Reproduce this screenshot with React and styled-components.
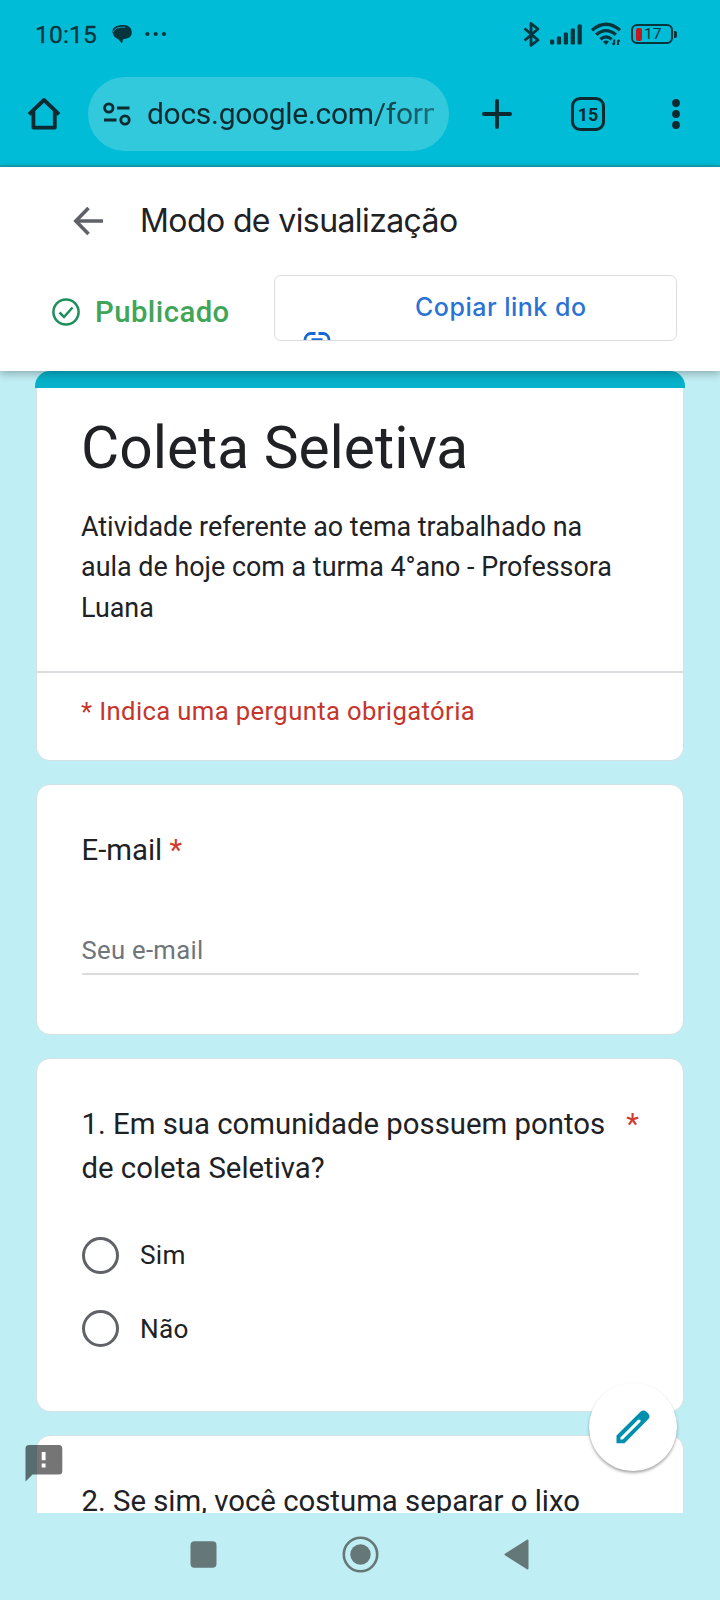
import { useState } from "react";
import styled, { createGlobalStyle } from "styled-components";

const form = {
  title: "Coleta Seletiva",
  description:
    "Atividade referente ao tema trabalhado na aula de hoje com a turma 4°ano - Professora Luana",
  requiredHint: "* Indica uma pergunta obrigatória",
  email: { label: "E-mail", placeholder: "Seu e-mail" },
  question1: {
    text: "1. Em sua comunidade possuem pontos de coleta Seletiva?",
    options: ["Sim", "Não"],
  },
  question2: "2. Se sim, você costuma separar o lixo",
};

const signalBars = [5, 8, 12, 16, 20];

function StatusIcons() {
  return (
    <StatusGroup>
      <svg width="18" height="27" viewBox="0 0 18 27">
        <path
          d="M1.5 7.5 L15 19 L8 24.5 V2.5 L15 8 L1.5 19.5"
          fill="none"
          stroke="#06353d"
          strokeWidth="2.8"
          strokeLinejoin="round"
        />
      </svg>
      <svg width="32" height="22" viewBox="0 0 32 22">
        {signalBars.map((h, i) => (
          <rect
            key={h}
            x={i * 6.9}
            y={21.5 - h}
            width="4.2"
            height={h}
            rx="1.2"
            fill="#06353d"
          />
        ))}
      </svg>
      <svg width="31" height="24" viewBox="0 0 31 24">
        <g fill="none" stroke="#06353d" strokeWidth="3.3">
          <path d="M1 8.2 Q15 -3.8 29 8.2" />
          <path d="M5.2 12.8 Q15 4.4 24.8 12.8" />
          <path d="M9.4 17.2 Q15 12.6 20.6 17.2" />
        </g>
        <path d="M12 19.5 Q15 17.4 18 19.5 L15 23 Z" fill="#06353d" />
        <path
          d="M23.2 17.5 V22.5 M21.6 21 L23.2 22.8 M27 23 V18 M28.6 19.6 L27 17.8"
          stroke="#06353d"
          strokeWidth="2"
          fill="none"
        />
      </svg>
      <Battery>
        <BatteryBody>
          <BatteryCharge />
          17
        </BatteryBody>
        <BatteryTip />
      </Battery>
    </StatusGroup>
  );
}

function BrowserBar() {
  return (
    <BrowserRow>
      <svg width="34" height="34" viewBox="0 0 34 34">
        <path
          d="M2 17.3 L17 3 L32 17.3 M6.4 14 V30.6 H27.8 V14"
          fill="none"
          stroke="#0b2b30"
          strokeWidth="3.8"
          strokeLinejoin="round"
        />
      </svg>
      <AddressPill>
        <svg width="28" height="24" viewBox="0 0 28 24">
          <g fill="none" stroke="#0b2b30" strokeWidth="2.8">
            <circle cx="5.8" cy="6" r="4.2" />
            <path d="M14 6 H26.5 M1 18 H13.5" />
            <circle cx="22" cy="18" r="4.2" />
          </g>
        </svg>
        <Address>docs.google.com/forms</Address>
      </AddressPill>
      <BrowserActions>
        <svg width="30" height="30" viewBox="0 0 30 30">
          <path
            d="M15 1.9 V28.1 M1.9 15 H28.1"
            stroke="#0b2b30"
            strokeWidth="3.8"
            strokeLinecap="round"
          />
        </svg>
        <TabCount>15</TabCount>
        <svg width="8" height="30" viewBox="0 0 8 30">
          <circle cx="4" cy="4" r="3.9" fill="#0b2b30" />
          <circle cx="4" cy="15" r="3.9" fill="#0b2b30" />
          <circle cx="4" cy="26" r="3.9" fill="#0b2b30" />
        </svg>
      </BrowserActions>
    </BrowserRow>
  );
}

function PreviewHeader() {
  return (
    <Header>
      <HeaderTop>
        <svg width="32" height="30" viewBox="0 0 32 30">
          <path
            d="M31 15 H4 M16.5 2 L3.8 15 L16.5 28"
            fill="none"
            stroke="#5f6368"
            strokeWidth="3.6"
          />
        </svg>
        <HeaderTitle>Modo de visualização</HeaderTitle>
      </HeaderTop>
      <HeaderActions>
        <Published>
          <svg width="28" height="28" viewBox="0 0 28 28">
            <g fill="none" stroke="#1e8e5a" strokeWidth="2.5">
              <circle cx="14" cy="14" r="12.6" />
              <path d="M7.5 14.5 L12 19 L20.5 9.5" />
            </g>
          </svg>
          Publicado
        </Published>
        <CopyButton>
          <CopyIcon width="28" height="15" viewBox="0 0 28 15">
            <g fill="none" stroke="#1967d2" strokeWidth="2.8">
              <path d="M12.5 1.5 H7.5 A6.3 6.3 0 0 0 7.5 14" />
              <path d="M15.5 1.5 H20.5 A6.3 6.3 0 0 1 20.5 14" />
              <path d="M8.5 7.6 H19.5" />
            </g>
          </CopyIcon>
          <CopyLabel>Copiar link do</CopyLabel>
        </CopyButton>
      </HeaderActions>
    </Header>
  );
}

function App() {
  const [answer, setAnswer] = useState(null);

  return (
    <Screen>
      <GlobalStyle />
      <TopArea>
        <StatusBar>
          <Clock>10:15</Clock>
          <svg width="20" height="20" viewBox="0 0 20 20">
            <path
              d="M0.5 7 C0.5 2.5 7 0 14 1.3 C17.5 2 19.8 5 19.8 8.6 C19.8 13 16 15 11 15.2 L10 19.6 L6.5 15.5 C3 14 0.5 11 0.5 7 Z"
              fill="#06353d"
            />
            <path
              d="M1.2 8 C3 4.2 6.5 2.8 13 3.3"
              fill="none"
              stroke="#00bcd7"
              strokeWidth="0.8"
            />
          </svg>
          <svg width="22" height="6" viewBox="0 0 22 6">
            <circle cx="2.4" cy="3" r="2.1" fill="#06353d" />
            <circle cx="10.7" cy="3" r="2.1" fill="#06353d" />
            <circle cx="19" cy="3" r="2.1" fill="#06353d" />
          </svg>
          <StatusIcons />
        </StatusBar>
        <BrowserBar />
      </TopArea>
      <PreviewHeader />
      <Page>
        <TitleCard>
          <TitleCardBar />
          <TitleCardBody>
            <Title>{form.title}</Title>
            <Description>{form.description}</Description>
            <RequiredHint>{form.requiredHint}</RequiredHint>
          </TitleCardBody>
        </TitleCard>
        <Card $height={251}>
          <Question>
            <span>
              {form.email.label} <Star>*</Star>
            </span>
          </Question>
          <EmailInput placeholder={form.email.placeholder} />
        </Card>
        <Card $height={354}>
          <Question>
            <span>{form.question1.text}</span>
            <Star>*</Star>
          </Question>
          <Options>
            {form.question1.options.map((option) => (
              <Option key={option} onClick={() => setAnswer(option)}>
                <Radio $checked={answer === option} />
                {option}
              </Option>
            ))}
          </Options>
        </Card>
        <Card $height={300}>
          <Question>{form.question2}</Question>
        </Card>
        <Feedback width="38" height="37" viewBox="0 0 38 37">
          <path
            d="M4 0 H34 Q37.3 0 37.3 3.5 V26 Q37.3 29.5 34 29.5 H7.5 L0.5 36.5 V3.5 Q0.5 0 4 0 Z M16.7 7 V15.2 H20.6 V7 Z M16.7 18.5 V22.4 H20.6 V18.5 Z"
            fillRule="evenodd"
            fill="#000"
            fillOpacity="0.54"
          />
        </Feedback>
        <EditButton>
          <svg width="34" height="34" viewBox="0 0 34 34">
            <path
              d="M0.5 25.5 L24.5 1.8 Q27.5 -0.8 30.5 1.8 L32.2 3.6 Q34.8 6.5 32.2 9.2 L8.5 33.3 H0.5 Z M4.4 27.4 V29.6 H6.6 L24 12.3 Q25.2 10.8 24.2 10 Q23 9 21.8 10 Z"
              fillRule="evenodd"
              fill="#0090ae"
            />
          </svg>
        </EditButton>
      </Page>
      <NavBar>
        <svg width="27" height="27" viewBox="0 0 27 27">
          <rect x="0.5" y="0.3" width="26" height="26.4" rx="4" fill="#667777" />
        </svg>
        <svg width="37" height="37" viewBox="0 0 37 37">
          <circle
            cx="18.5"
            cy="18.5"
            r="16.7"
            fill="none"
            stroke="#667777"
            strokeWidth="2.6"
          />
          <circle cx="18.5" cy="18.5" r="10.2" fill="#667777" />
        </svg>
        <svg width="25" height="31" viewBox="0 0 25 31">
          <path
            d="M1.5 15.5 L23.5 1.5 V29.5 Z"
            fill="#667777"
            stroke="#667777"
            strokeWidth="2"
            strokeLinejoin="round"
          />
        </svg>
      </NavBar>
    </Screen>
  );
}

export default App;

const GlobalStyle = createGlobalStyle`
  body {
    margin: 0;
    font-family: Roboto, "Liberation Sans", sans-serif;
    color: #202124;
  }

  * {
    box-sizing: border-box;
  }

  svg {
    display: block;
    flex-shrink: 0;
  }
`;

const Screen = styled.div`
  width: 720px;
  height: 1600px;
  display: flex;
  flex-direction: column;
  overflow: hidden;
  background: #bfeef4;
`;

const TopArea = styled.div`
  height: 167px;
  flex-shrink: 0;
  background: #00bcd7;
  border-bottom: 2px solid #12a5b6;
`;

const StatusBar = styled.div`
  height: 68px;
  padding: 0 43px 0 35px;
  display: flex;
  align-items: center;
`;

const Clock = styled.div`
  width: 77px;
  padding-top: 1px;
  font-size: 24.5px;
  letter-spacing: 0.2px;
  color: #06353d;
  -webkit-text-stroke: 0.3px #06353d;

  & + svg {
    margin-right: 13px;
  }
`;

const StatusGroup = styled.div`
  margin-left: auto;
  display: flex;
  align-items: center;
  gap: 9px;
`;

const Battery = styled.div`
  display: flex;
  align-items: center;
  gap: 1px;
`;

const BatteryBody = styled.div`
  width: 42px;
  height: 20px;
  padding-left: 3px;
  display: flex;
  align-items: center;
  gap: 2px;
  border: 2px solid #06353d;
  border-radius: 6px;
  font-size: 15.5px;
  color: #06353d;
`;

const BatteryCharge = styled.div`
  width: 6px;
  height: 13px;
  border-radius: 2px;
  background: #c4161c;
`;

const BatteryTip = styled.div`
  width: 3px;
  height: 7px;
  border-radius: 0 2px 2px 0;
  background: #06353d;
`;

const BrowserRow = styled.div`
  height: 92px;
  padding: 0 40px 0 27px;
  display: flex;
  align-items: center;
`;

const AddressPill = styled.div`
  width: 361px;
  height: 74px;
  margin-left: 27px;
  padding: 0 15px;
  display: flex;
  align-items: center;
  gap: 16px;
  border-radius: 37px;
  background: #33c9dd;
`;

const Address = styled.div`
  width: 287px;
  overflow: hidden;
  white-space: nowrap;
  font-size: 30px;
  letter-spacing: -0.3px;
  line-height: 42px;
  color: #0b2b30;
  mask-image: linear-gradient(to right, #000 75%, rgba(0, 0, 0, 0.55));
`;

const BrowserActions = styled.div`
  flex: 1;
  margin-left: 33px;
  display: flex;
  align-items: center;
`;

const TabCount = styled.div`
  width: 34px;
  height: 34px;
  margin: 0 auto 0 59px;
  display: flex;
  align-items: center;
  justify-content: center;
  border: 3.6px solid #0b2b30;
  border-radius: 9px;
  font-size: 18px;
  font-weight: 700;
  color: #0b2b30;
`;

const Header = styled.header`
  height: 203.5px;
  flex-shrink: 0;
  position: relative;
  z-index: 1;
  background: #fff;
  box-shadow: 0 2px 9px rgba(0, 0, 0, 0.32);
`;

const HeaderTop = styled.div`
  height: 108px;
  padding: 0 0 1px 72px;
  display: flex;
  align-items: center;
  gap: 36px;
`;

const HeaderTitle = styled.h1`
  margin: 0;
  padding-bottom: 1px;
  font-family: Inter, Roboto, sans-serif;
  font-size: 32px;
  font-weight: 400;
  letter-spacing: -0.6px;
`;

const HeaderActions = styled.div`
  padding: 0 43px 0 52px;
  display: flex;
  justify-content: space-between;
`;

const Published = styled.div`
  height: 74px;
  display: flex;
  align-items: center;
  gap: 15px;
  font-size: 29.3px;
  font-weight: 500;
  letter-spacing: 0.45px;
  color: #41a558;
`;

const CopyButton = styled.button`
  width: 403px;
  height: 66px;
  padding: 0;
  display: flex;
  align-items: flex-start;
  overflow: hidden;
  border: 1.6px solid #dadce0;
  border-radius: 7px;
  background: #fff;
`;

const CopyIcon = styled.svg`
  margin: 56px 0 0 28px;
`;

const CopyLabel = styled.span`
  margin: 11px 0 0 84px;
  font-family: Inter, Roboto, sans-serif;
  font-size: 25px;
  font-weight: 500;
  line-height: 40px;
  letter-spacing: 0.5px;
  color: #2a72d4;
`;

const Page = styled.main`
  flex: 1;
  min-height: 0;
  padding: 0 35px;
  display: flex;
  flex-direction: column;
  align-items: center;
  gap: 23px;
  position: relative;
  overflow: hidden;
`;

const Card = styled.section`
  width: 648px;
  height: ${({ $height }) => $height}px;
  flex-shrink: 0;
  padding: 43px 44px 0 44.5px;
  border: 1.5px solid #d3e2e5;
  border-radius: 14px;
  background: #fff;
`;

const TitleCard = styled.section`
  width: 650px;
  height: 390px;
  flex-shrink: 0;
`;

const TitleCardBar = styled.div`
  height: 17.5px;
  border-radius: 15px 15px 0 0;
  background: #07b1c9;
`;

const TitleCardBody = styled.div`
  width: 648px;
  height: 372.5px;
  margin: 0 auto;
  border: 1.5px solid #d3e2e5;
  border-top: 0;
  border-radius: 0 0 14px 14px;
  background: #fff;
  overflow: hidden;
`;

const Title = styled.h2`
  margin: 0;
  padding: 23px 44px 22px;
  font-size: 58.67px;
  font-weight: 400;
  line-height: 74px;
`;

const Description = styled.p`
  margin: 0;
  padding: 0 44px 43.5px;
  border-bottom: 2px solid #dadce0;
  font-size: 26.9px;
  line-height: 40.3px;
`;

const RequiredHint = styled.p`
  margin: 19.5px 44px 0;
  font-size: 25.67px;
  line-height: 37px;
  letter-spacing: 0.37px;
  color: #c5352b;
`;

const Question = styled.div`
  display: flex;
  justify-content: space-between;
  gap: 16px;
  font-size: 29.34px;
  line-height: 44px;
`;

const Star = styled.span`
  color: #d13a30;
`;

const EmailInput = styled.input`
  width: 100%;
  height: 49px;
  margin-top: 54px;
  padding: 1px 0 0;
  border: 0;
  border-bottom: 2px solid #dadce0;
  outline: none;
  font-family: inherit;
  font-size: 25.67px;
  letter-spacing: 0.3px;
  background: transparent;

  &::placeholder {
    color: #70757a;
    opacity: 1;
  }
`;

const Options = styled.div`
  margin-top: 29px;
`;

const Option = styled.label`
  height: 73.5px;
  display: flex;
  align-items: center;
  gap: 21.5px;
  font-size: 26.2px;
  letter-spacing: 0.3px;
`;

const Radio = styled.span`
  width: 37px;
  height: 37px;
  border: 3.8px solid #5f6368;
  border-radius: 50%;
  background: ${({ $checked }) => ($checked ? "#00bcd7" : "transparent")};
`;

/* floats over the left edge of the cards */
const Feedback = styled.svg`
  position: absolute;
  left: 25px;
  bottom: 31px;
`;

const EditButton = styled.button`
  position: absolute;
  right: 43.5px;
  bottom: 42.5px;
  width: 88px;
  height: 88px;
  padding: 0;
  display: flex;
  align-items: center;
  justify-content: center;
  border: 0;
  border-radius: 50%;
  background: #fff;
  box-shadow: 0 2px 3px rgba(0, 0, 0, 0.35);
`;

const NavBar = styled.nav`
  height: 87px;
  flex-shrink: 0;
  padding: 0 191px 4px 190px;
  display: flex;
  align-items: center;
  justify-content: space-between;
`;
